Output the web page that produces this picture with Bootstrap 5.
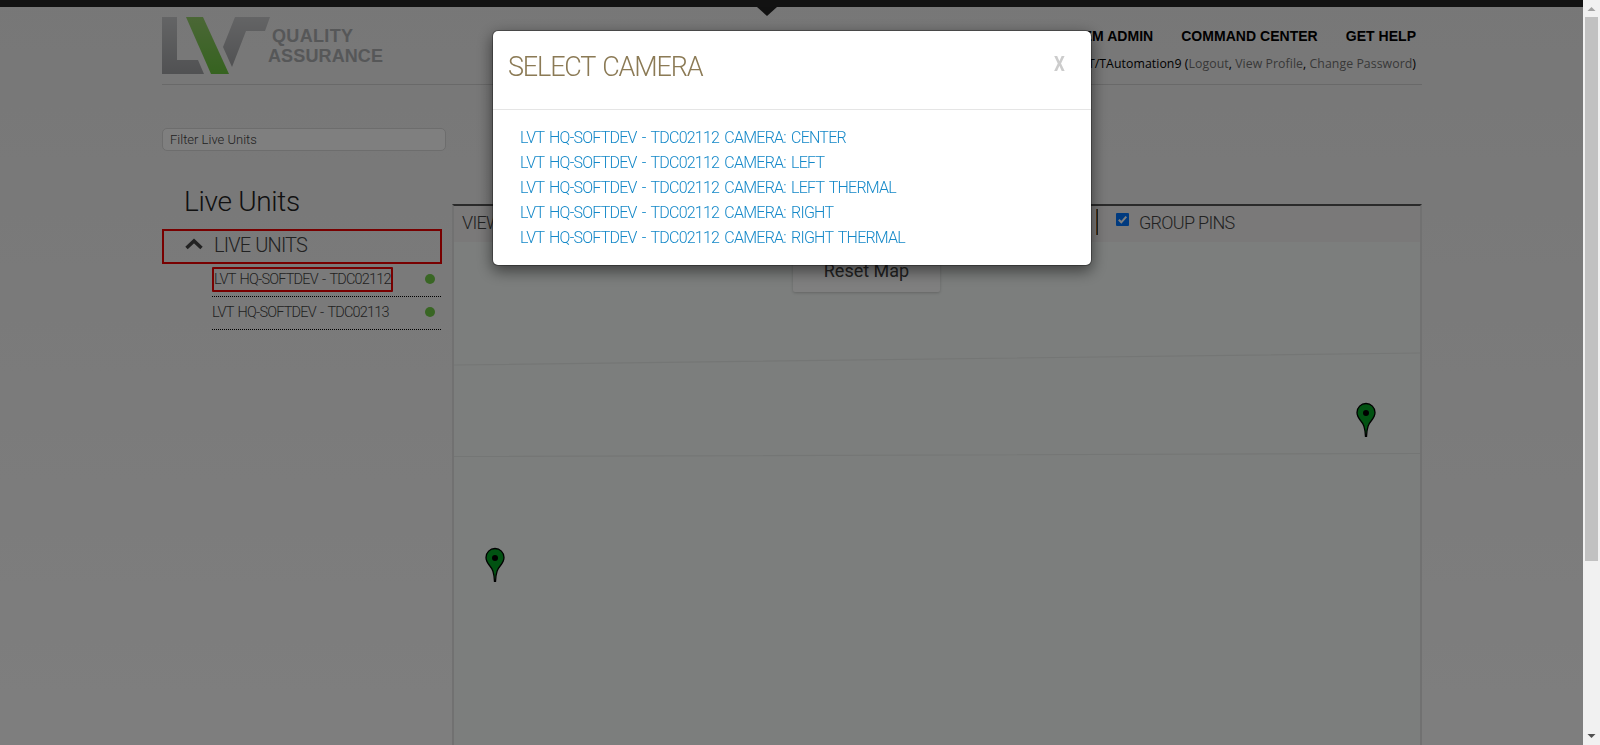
<!DOCTYPE html>
<html lang="en">
<head>
<meta charset="utf-8">
<meta name="viewport" content="width=device-width, initial-scale=1">
<title>Live Units</title>
<link href="https://cdn.jsdelivr.net/npm/bootstrap@5.3.0/dist/css/bootstrap.min.css" rel="stylesheet">
<style>
html,body{height:100%;overflow:hidden}
body{font-family:Roboto,"Open Sans",sans-serif;font-weight:300;color:#222;background:#fff}
.page{height:745px;background:linear-gradient(#efefef,#fdfdfd)}
.topbar{height:7px;background:#242424;flex:none}
.notch{top:7px;left:757px;width:20px;height:9px;background:#222;clip-path:polygon(0 0,100% 0,50% 100%)}
.wrap{width:1260px;margin-left:162px}
.site-head{height:78px;border-bottom:1px solid #d2d2d2}
.nav-main{font:bold 14px/18px "Liberation Sans",Arial,sans-serif;color:#000;gap:28px;letter-spacing:.03px}
.user-line{font:12.3px/18px "Open Sans",sans-serif;color:#000;letter-spacing:.06px}
.user-line a{color:#707070;text-decoration:none}
.side{width:284px;padding-top:43px}
.filter{height:23px;border:1px solid #dadada;border-radius:5px;background:#fefefe;padding:0 7px;font-size:13px;line-height:21px;color:#444}
.side-title{font-size:28px;line-height:34px;margin:34px 0 0 22px;letter-spacing:-.3px}
.group-row{width:280px;height:35px;border:2px solid #f00000;margin-top:10px;padding:0 0 3px 21px;font-size:20px;color:#444;letter-spacing:-.85px;word-spacing:1px}
.unit{width:229px;height:33px;margin-left:50px;border-bottom:1px dotted #000;font-size:14.5px;color:#444;padding:0 6px 2px 0;letter-spacing:-.8px;word-spacing:1.5px}
.unit .nm{line-height:21px;border:2px solid transparent;border-left-width:0;white-space:nowrap}
.unit .nm.on{border:2px solid #f00000;border-radius:1px}
.dot{width:10px;height:10px;border-radius:50%;background:#72cc48}
.mapbox{width:970px;margin-left:6px;margin-top:119px;height:541px;border:2px solid #e2e2e2;border-top-color:#555;border-bottom:0}
.tools{height:36px;background:#f4f2f2;font-size:18px;color:#444;letter-spacing:-.7px}
.map{background:#f8fcfa}
.reset{left:339px;top:0;width:147px;height:50px;background:#fff;color:#444;border-radius:2px;box-shadow:0 1px 3px rgba(0,0,0,.2);font:400 18px/58px Roboto,sans-serif;letter-spacing:0}
.pin{width:20px;height:35px}
.sbar{right:0;top:0;width:17px;height:745px;background:#f1f1f1;z-index:1100}
.thumb{margin:1px 2px 0;height:544px;width:13px;background:#c1c1c1}
.modal-backdrop{width:1583px;height:745px}
.modal{display:block;padding:0;width:1583px;overflow:hidden}
.modal-dialog{width:600px;max-width:600px;margin:30px 0 0 492px}
.modal-content{height:236px;border:1px solid rgba(0,0,0,.3);border-radius:6px;box-shadow:0 5px 15px rgba(0,0,0,.5)}
.modal-header{height:79px;padding:13px 25px 0 15px;border-color:#e5e5e5}
.modal-title{font-size:27px;line-height:47px;color:#8b7a55;font-weight:300;letter-spacing:-1.15px;word-spacing:2px}
.shut{font:700 20px/40px Roboto,sans-serif;color:#ccc;background:none;border:0;padding:0;transform:scaleX(.85)}
.cams{padding:15px 26px 15px 27px}
.cams a{display:block;font-size:16px;line-height:25px;color:#1488c8;text-decoration:none;white-space:nowrap;letter-spacing:-.76px;word-spacing:2px}
</style>
</head>
<body>
<div class="page position-relative overflow-hidden">
  <div class="topbar"></div>
  <div class="notch position-absolute"></div>
  <div class="wrap">
    <header class="site-head d-flex justify-content-between">
      <svg width="224" height="64" viewBox="0 0 224 64" style="margin-top:7px">
        <defs>
          <linearGradient id="g" x2="0" y2="1"><stop stop-color="#c8c9cb"/><stop offset="1" stop-color="#a2a3a6"/></linearGradient>
          <linearGradient id="v" x2="0" y2="1"><stop stop-color="#96ce6c"/><stop offset="1" stop-color="#6cc640"/></linearGradient>
        </defs>
        <path fill="url(#g)" d="M0 3h15v43h21l6 14H0z"/>
        <path fill="url(#v)" d="M24 3h17l26 57H49z"/>
        <path fill="url(#g)" d="M73 3h35l-5 14H84L70 53 61 33z"/>
        <g fill="#acafb1" font-family="Liberation Sans" font-weight="700" font-size="18"><text x="110" y="28" textLength="81">QUALITY</text><text x="106" y="48" textLength="115">ASSURANCE</text></g>
      </svg>
      <div class="text-end" style="padding:20px 6px 0 0">
        <div class="nav-main d-flex justify-content-end"><span>SYSTEM ADMIN</span><span>COMMAND CENTER</span><span>GET HELP</span></div>
        <div class="user-line" style="margin-top:10px">LVT/TAutomation9 (<a href="#">Logout</a>, <a href="#">View Profile</a>, <a href="#">Change Password</a>)</div>
      </div>
    </header>
    <main class="d-flex">
      <aside class="side">
        <div class="filter">Filter Live Units</div>
        <h1 class="side-title fw-light">Live Units</h1>
        <div class="group-row d-flex align-items-center">
          <svg width="18" height="12" viewBox="0 0 18 12" style="margin-top:-2px"><path d="M1.500 10 9 3l7.500 7" fill="none" stroke="#444" stroke-width="3.500"/></svg>
          <span style="margin-left:11px">LIVE UNITS</span>
        </div>
        <div class="unit d-flex align-items-center justify-content-between"><span class="nm on">LVT HQ-SOFTDEV - TDC02112</span><i class="dot"></i></div>
        <div class="unit d-flex align-items-center justify-content-between"><span class="nm">LVT HQ-SOFTDEV - TDC02113</span><i class="dot"></i></div>
      </aside>
      <section class="mapbox d-flex flex-column">
        <div class="tools d-flex align-items-start">
          <span style="padding:3px 0 0 8px;width:642px">VIEW</span>
          <span style="width:2px;height:26px;margin-top:3px;background:linear-gradient(90deg,#b06820 50%,#305068 50%)"></span>
          <svg width="13" height="13" style="margin:7px 10px 0 18px"><rect width="13" height="13" rx="1" fill="#0075ff"/><path d="M2.800 6.800 5.300 9.300 10.300 3.600" fill="none" stroke="#fff" stroke-width="2"/></svg>
          <span style="padding-top:3px">GROUP PINS</span>
        </div>
        <div class="map flex-fill position-relative">
          <svg class="position-absolute" width="966" height="503"><path d="M0 123 966 111M0 214.500 966 211.500" stroke="#e9ecea" stroke-width="1.200" fill="none"/></svg>
          <div class="reset position-absolute text-center">Reset Map</div>
          <svg class="pin position-absolute" style="left:902px;top:160px" viewBox="0 0 20 35"><path id="p" d="M10 1.500C5 1.500 1 5.500 1 10.500c0 3 1.500 5.500 3.500 8C7.500 22 9 25 9.500 34.500h1C11 25 12.500 22 15.500 18.500 17.500 16 19 13.500 19 10.500c0-5-4-9-9-9z" fill="#02a424" stroke="#000" stroke-width="1.300"/><circle cx="10" cy="11" r="3"/></svg>
          <svg class="pin position-absolute" style="left:31px;top:305px" viewBox="0 0 20 35"><use href="#p"/><circle cx="10" cy="11" r="3"/></svg>
        </div>
      </section>
    </main>
  </div>
</div>
<div class="modal-backdrop show"></div>
<div class="modal show">
  <div class="modal-dialog">
    <div class="modal-content">
      <div class="modal-header align-items-start"><h2 class="modal-title">SELECT CAMERA</h2><button class="shut">X</button></div>
      <div class="cams">
        <a href="#">LVT HQ-SOFTDEV - TDC02112 CAMERA: CENTER</a>
        <a href="#">LVT HQ-SOFTDEV - TDC02112 CAMERA: LEFT</a>
        <a href="#">LVT HQ-SOFTDEV - TDC02112 CAMERA: LEFT THERMAL</a>
        <a href="#">LVT HQ-SOFTDEV - TDC02112 CAMERA: RIGHT</a>
        <a href="#">LVT HQ-SOFTDEV - TDC02112 CAMERA: RIGHT THERMAL</a>
      </div>
    </div>
  </div>
</div>
<div class="sbar position-fixed d-flex flex-column">
  <svg width="17" height="16"><path d="M4.500 11h8L8.500 7z" fill="#a3a3a3"/></svg>
  <div class="thumb"></div>
  <svg class="mt-auto" width="17" height="17"><path d="M4.500 6h8l-4 4z" fill="#505050"/></svg>
</div>
<script src="https://cdn.jsdelivr.net/npm/bootstrap@5.3.0/dist/js/bootstrap.bundle.min.js"></script>
</body>
</html>
